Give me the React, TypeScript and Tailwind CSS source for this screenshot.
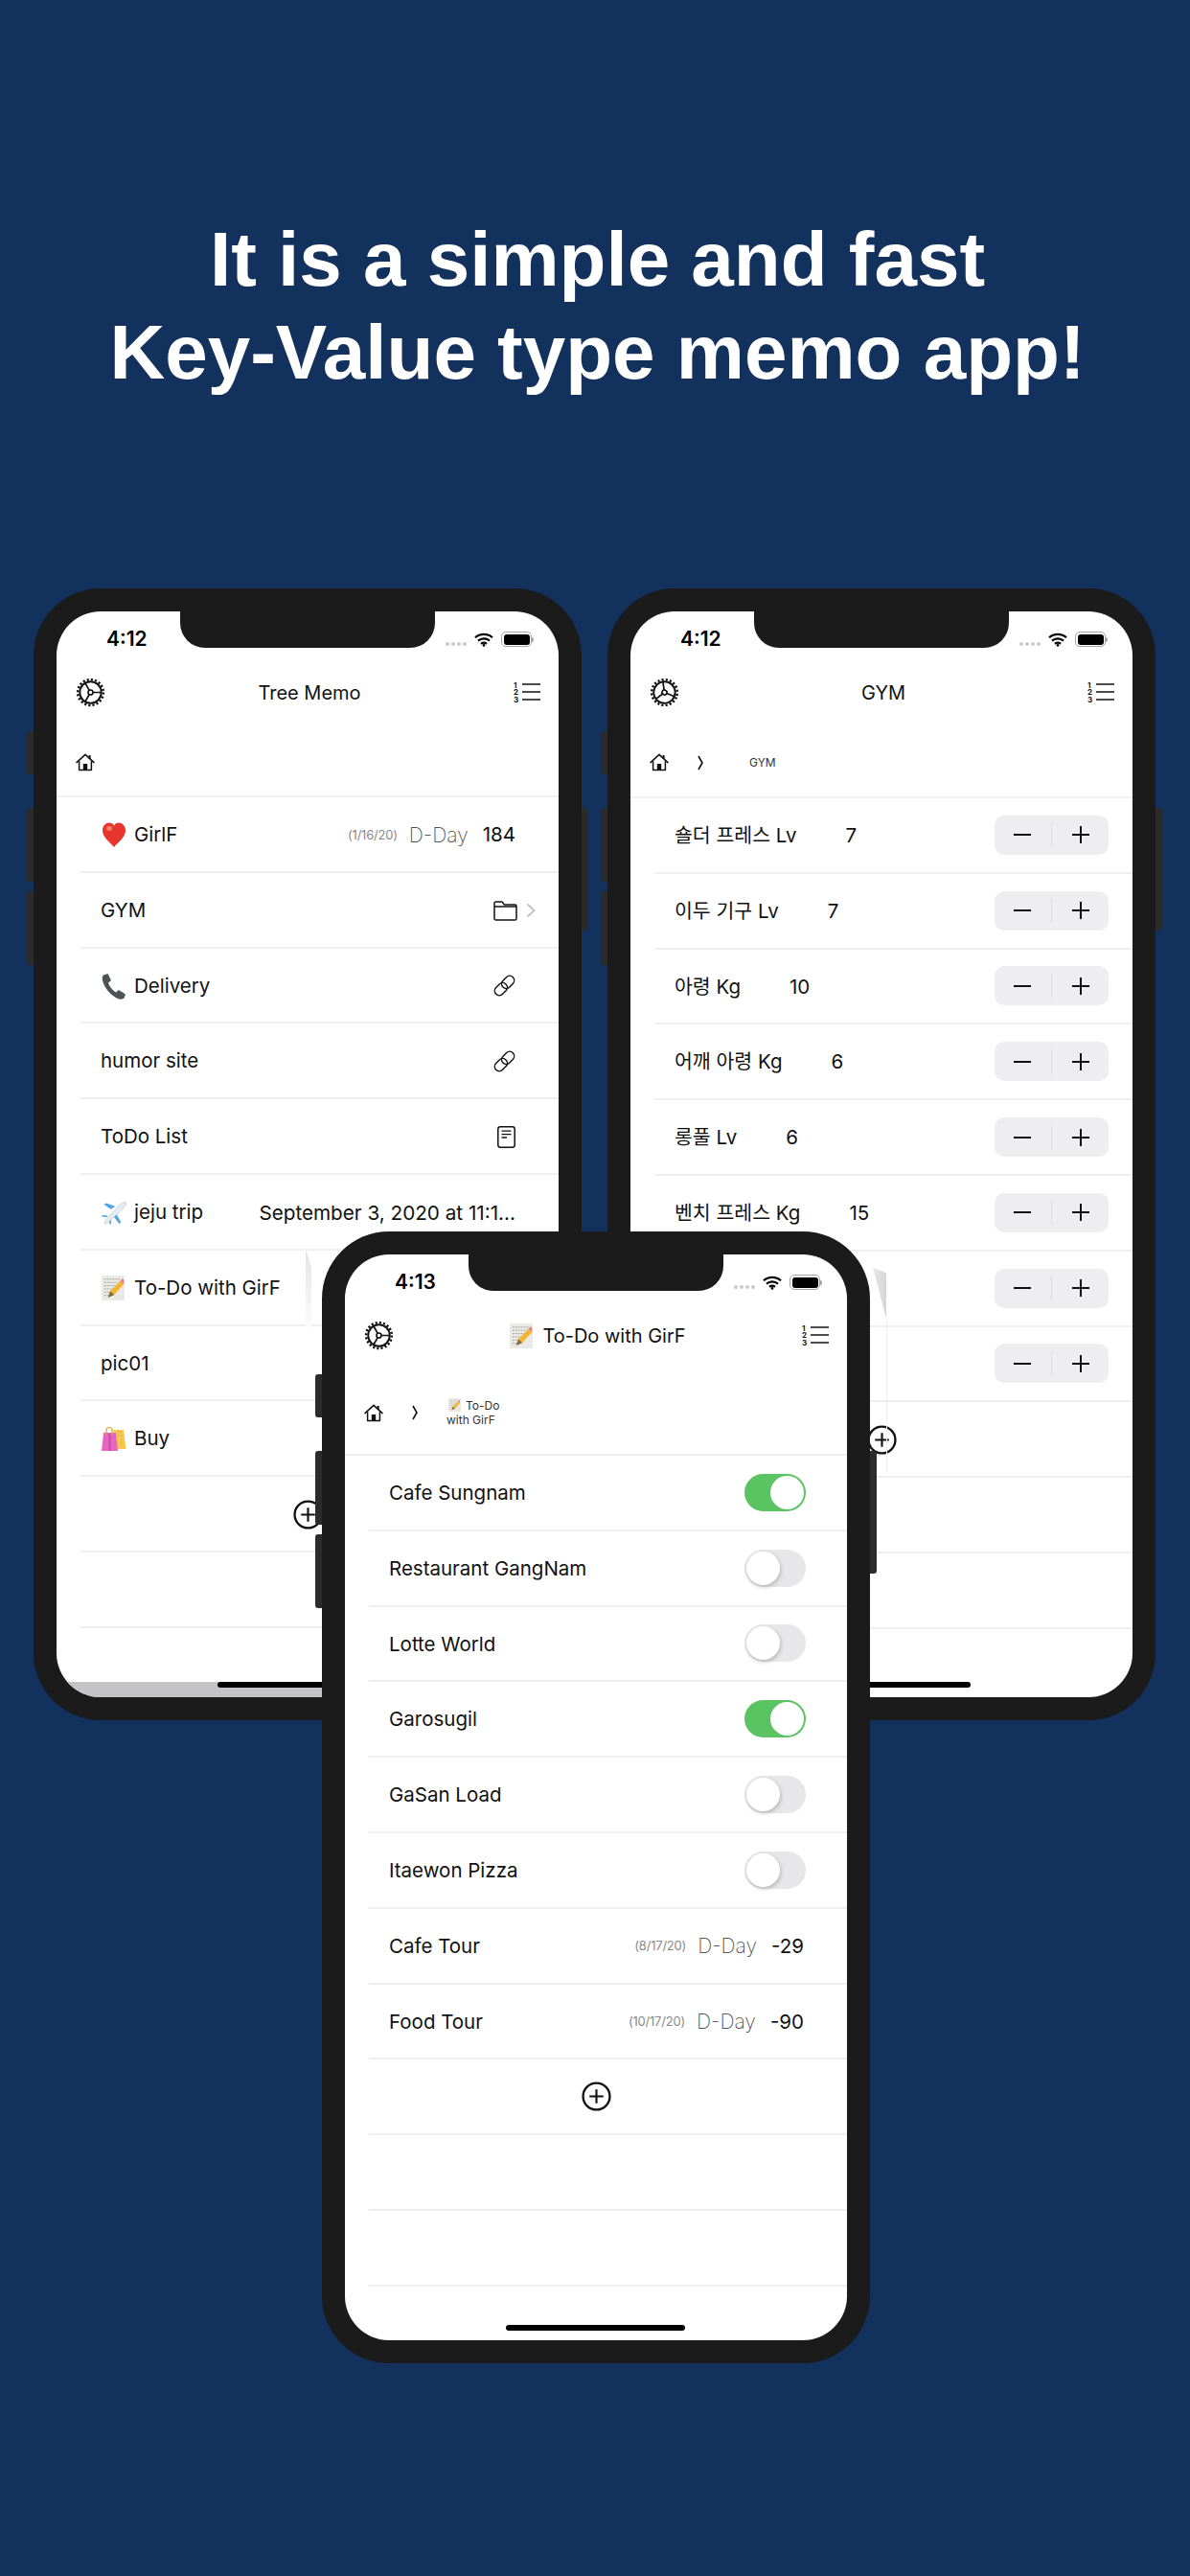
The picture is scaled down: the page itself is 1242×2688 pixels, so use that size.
import type { ReactNode } from "react";

const sans = "font-['Inter','Noto_Sans_CJK_KR',sans-serif]";

function Gear({ rotate = 0 }: { rotate?: number }) {
  return (
    <svg viewBox="0 0 32 32" className="w-[31px] h-[31px]" fill="none" stroke="#111">
      <g transform={`rotate(${rotate} 16 16)`}>
        <circle cx="16" cy="16" r="11.6" strokeWidth="2" />
        <circle cx="16" cy="16" r="13.8" strokeWidth="2.6" strokeDasharray="2.2 2.13" />
        <circle cx="16" cy="16" r="2.6" strokeWidth="1.7" />
        <path d="M18.6 16H27M14.7 13.75L10.2 6M14.7 18.25L10.2 26" strokeWidth="1.8" />
      </g>
    </svg>
  );
}

function NumberList() {
  return (
    <svg viewBox="0 0 28 22" className="w-[28px] h-[22px]" fill="#111">
      <path d="M9 3h19M9 11h19M9 19h19" stroke="#111" strokeWidth="1.6" />
      <text x="0" y="6.5" fontSize="8" fontWeight="700" fontFamily="Inter, sans-serif">1</text>
      <text x="0" y="14" fontSize="8" fontWeight="700" fontFamily="Inter, sans-serif">2</text>
      <text x="0" y="21.5" fontSize="8" fontWeight="700" fontFamily="Inter, sans-serif">3</text>
    </svg>
  );
}

function Home() {
  return (
    <svg viewBox="0 0 20 19" className="w-[20px] h-[19px]" fill="none" stroke="#111" strokeWidth="1.5">
      <path d="M1 9.6L10 1.4l9 8.2" strokeLinecap="round" strokeLinejoin="round" />
      <path d="M3.6 8.2V17.6H16.4V8.2" strokeLinejoin="round" />
      <path d="M14.6 2v4" strokeWidth="2" />
      <rect x="7.8" y="11" width="4.4" height="6.6" fill="#111" stroke="none" />
    </svg>
  );
}

function Folder() {
  return (
    <svg viewBox="0 0 25 21" className="w-[25px] h-[21px]" fill="none" stroke="#111" strokeWidth="1.5">
      <path d="M1 6V2.6C1 1.6 1.6 1 2.6 1H9l2.4 3H22.4c1 0 1.6.6 1.6 1.6V18.4c0 1-.6 1.6-1.6 1.6H2.6C1.6 20 1 19.4 1 18.4V6H24" strokeLinejoin="round" />
    </svg>
  );
}

function Chain() {
  return (
    <svg viewBox="0 0 24 24" className="w-[23px] h-[23px]" fill="none" stroke="#111" strokeWidth="1.5">
      <rect x="-7.6" y="-5" width="15.2" height="10" rx="5" transform="translate(8.2 15.8) rotate(-45)" />
      <rect x="-7.6" y="-5" width="15.2" height="10" rx="5" transform="translate(15.8 8.2) rotate(-45)" />
    </svg>
  );
}

function DocIcon() {
  return (
    <svg viewBox="0 0 19 23" className="w-[19px] h-[23px]" fill="none" stroke="#111">
      <rect x="0.8" y="0.8" width="17.4" height="21.4" rx="2.4" strokeWidth="1.5" />
      <path d="M4.5 5.2h10M4.5 8.6h10M4.5 12h5.5" strokeWidth="1.3" />
    </svg>
  );
}

function AddButton() {
  return (
    <svg viewBox="0 0 32 32" className="w-[31px] h-[31px]" fill="none" stroke="#111">
      <circle cx="16" cy="16" r="14.4" strokeWidth="2.4" />
      <path d="M8.5 16h15M16 8.5v15" strokeWidth="2.2" />
    </svg>
  );
}

function Heart() {
  return (
    <svg viewBox="0 0 26 28" className="w-[26px] h-[28px]">
      <path d="M13 27C8 21 1 16.500 1 9.500 1 4.500 4.500 1.500 8 1.500c2.300 0 4 1.200 5 3.200 1-2 2.700-3.200 5-3.200 3.500 0 7 3 7 8 0 7-7 11.500-12 17.500z" fill="#e8352e" />
      <ellipse cx="8" cy="7.500" rx="3" ry="2.500" fill="#f87d70" />
    </svg>
  );
}

function PhoneEmoji() {
  return (
    <svg viewBox="0 0 26 28" className="w-[26px] h-[28px]">
      <path d="M2 2.500L6.500 1 10 8l-3 2.500c1 3.500 4.500 8 8 10l3-2.500 7 4.500-1.500 4c-1 1-3 1.500-5 1C10 25 2 15 0.800 7 .5 5 1 3.500 2 2.500z" fill="#4d5257" />
    </svg>
  );
}

function Plane() {
  return (
    <svg viewBox="0 0 28 28" className="w-[27px] h-[27px]">
      <path d="M11 10L3.500 5 6 3.500 16 7z" fill="#4ea4e4" />
      <path d="M17 15l5 9-1.800 2L14 18z" fill="#4ea4e4" />
      <path d="M6.500 19L1 18l1-1.500 6 .5zM9 21l1 6 1.500-1-.5-6z" fill="#4ea4e4" />
      <path d="M4.500 23.500C8 19 16 10 22 4.500c2-1.500 4.500-2.500 5.300-1.800.8.800-.2 3.300-1.800 5.300C20 14 11 22 6.500 25.500c-1.500 1-3 .5-2-2z" fill="#e8edf2" stroke="#a9b6c2" strokeWidth=".6" />
    </svg>
  );
}

function Memo() {
  return (
    <svg viewBox="0 0 26 27" className="w-[25px] h-[26px]">
      <rect x="0" y="0" width="25" height="27" fill="#e9e9e6" />
      <path d="M3 4h17M3 7.500h14M3 11h16M3 14.500h10M3 18h8M3 21.500h6" stroke="#9a9a98" strokeWidth=".9" strokeDasharray="2 1" />
      <path d="M7 24l2.500-7L20 6l4 3.500L13.500 21z" fill="#f2b632" />
      <path d="M20 6l1.800-1.900c.8-.6 1.700-.5 2.300.2.600.7.600 1.700 0 2.400L24 9.500z" fill="#e58686" />
      <path d="M7 24l2.500-7 4 4z" fill="#7a6a4a" />
    </svg>
  );
}

function Bags() {
  return (
    <svg viewBox="0 0 27 27" className="w-[27px] h-[27px]">
      <path d="M13 4h11l2.500 20H15z" fill="#f4c94f" />
      <path d="M18 6h1M18 10h1M21 6h1M21 10h1M21 14h1M21 18h1" stroke="#d08a33" strokeWidth="1.2" />
      <path d="M3 7h13l2 19H1z" fill="#e864c4" />
      <path d="M6 10V4.500C6 2.500 7.500 1.500 9 1.500s3 1 3 3V10" fill="none" stroke="#d9a13d" strokeWidth="1.2" />
      <path d="M8.500 8v18h2V8z" fill="#c84fa8" />
    </svg>
  );
}

function Phone({ time, children, strip }: { time: string; children: ReactNode; strip?: boolean }) {
  return (
    <div className="relative w-[572px] h-[1181px] shrink-0 rounded-[70px] bg-[#1b1b1b] p-[24px]">
      <div className="absolute left-[-7px] top-[149px] w-[7px] h-[45px] rounded-l-[3px] bg-[#2b2b2b]" />
      <div className="absolute left-[-7px] top-[229px] w-[7px] h-[77px] rounded-l-[3px] bg-[#2b2b2b]" />
      <div className="absolute left-[-7px] top-[316px] w-[7px] h-[77px] rounded-l-[3px] bg-[#2b2b2b]" />
      <div className="absolute right-[-7px] top-[229px] w-[7px] h-[128px] rounded-r-[3px] bg-[#2b2b2b]" />
      <div className={`relative w-[524px] h-[1133px] overflow-hidden rounded-[46px] bg-white ${sans}`}>
        <div className="absolute left-[129px] top-0 w-[266px] h-[38px] rounded-b-[26px] bg-[#1b1b1b]" />
        <div className="h-[60px] pt-[16px] pl-[52px] pr-[26px]">
          <div className="flex h-[26px] items-center">
            <span className="text-[21px] leading-[26px] font-semibold text-black">{time}</span>
            <div className="ml-auto flex items-center">
              <div className="mt-[10px] flex gap-[1.500px]">
                <i className="w-[4.500px] h-[4.500px] rounded-full bg-[#c9c9c9]" />
                <i className="w-[4.500px] h-[4.500px] rounded-full bg-[#c9c9c9]" />
                <i className="w-[4.500px] h-[4.500px] rounded-full bg-[#c9c9c9]" />
                <i className="w-[4.500px] h-[4.500px] rounded-full bg-[#c9c9c9]" />
              </div>
              <svg viewBox="0 0 20 15" className="ml-[8px] w-[20px] h-[15px]" fill="none" stroke="#000" strokeWidth="2.200">
                <path d="M1 5.200c5-4.500 13-4.500 18 0M4 8.600c3.400-3 8.600-3 12 0M7 11.800c1.800-1.400 4.200-1.400 6 0" />
                <circle cx="10" cy="13.400" r="1.300" fill="#000" stroke="none" />
              </svg>
              <div className="ml-[8px] flex h-[16px] w-[32px] items-center justify-center rounded-[5px] border border-[#a5a5a5]">
                <div className="h-[11px] w-[27px] rounded-[3px] bg-black" />
              </div>
              <div className="h-[5px] w-[2px] rounded-r-[2px] bg-[#a5a5a5]" />
            </div>
          </div>
        </div>
        {children}
        {strip && <div className="absolute bottom-0 left-0 h-[16px] w-full bg-[#c4c4c6]" />}
        <div className="absolute bottom-[10px] left-[168px] h-[6.500px] w-[187px] rounded-full bg-black" />
      </div>
    </div>
  );
}

function NavBar({ title, icon, gearRotate = 0 }: { title: string; icon?: ReactNode; gearRotate?: number }) {
  return (
    <div className="flex h-[48px] items-center pl-[20px] pr-[19px]">
      <Gear rotate={gearRotate} />
      <div className="flex flex-1 items-center justify-center gap-[9px] pt-[2px] text-[20px] text-[#111]">
        {icon}
        <span>{title}</span>
      </div>
      <NumberList />
    </div>
  );
}

function Row({ children, className = "" }: { children?: ReactNode; className?: string }) {
  return (
    <div className={`flex h-[78.8px] items-center border-b-2 border-[#efeff0] pt-[2px] pl-[21px] pr-[45px] text-[20.5px] text-[#111] ${className}`}>
      {children}
    </div>
  );
}

function EmojiLabel({ icon, text }: { icon: ReactNode; text: string }) {
  return (
    <div className="flex items-center gap-[8px]">
      <span className="flex w-[27px] justify-center">{icon}</span>
      <span>{text}</span>
    </div>
  );
}

function DDay({ date, value }: { date: string; value: string }) {
  return (
    <div className="ml-auto flex items-center">
      <span className="text-[13px] tracking-[-0.2px] text-[#8a8a8a]">{date}</span>
      <span className="ml-[12px] text-[21px] font-extralight text-[#555]">D-Day</span>
      <span className="ml-[15px] text-[20.5px]">{value}</span>
    </div>
  );
}

function Stepper() {
  return (
    <div className="flex h-[41px] w-[119px] items-center rounded-[10px] bg-[#eeeef0]">
      <div className="flex flex-1 justify-center">
        <div className="h-[2px] w-[18px] bg-[#111]" />
      </div>
      <div className="h-[26px] w-[1.500px] bg-[#dcdcde]" />
      <div className="relative flex flex-1 items-center justify-center">
        <div className="h-[2px] w-[18px] bg-[#111]" />
        <div className="absolute h-[18px] w-[2px] bg-[#111]" />
      </div>
    </div>
  );
}

function GymRow({ label, value }: { label: string; value: string }) {
  return (
    <Row className="!pr-[25px] !pt-0">
      <span className="pt-[2px]">{label}</span>
      <span className="ml-[51px] pt-[2px]">{value}</span>
      <div className="ml-auto">
        <Stepper />
      </div>
    </Row>
  );
}

function Toggle({ on }: { on?: boolean }) {
  return on ? (
    <div className="ml-auto flex h-[39px] w-[64px] items-center justify-end rounded-full bg-[#5ac463] pr-[2px]">
      <div className="h-[35px] w-[35px] rounded-full bg-white" />
    </div>
  ) : (
    <div className="ml-auto flex h-[39px] w-[64px] items-center rounded-full bg-[#e7e7e9] pl-[2px]">
      <div className="h-[35px] w-[35px] rounded-full bg-white shadow-[1px_2px_4px_rgba(0,0,0,0.22)]" />
    </div>
  );
}

function TreePhone() {
  return (
    <Phone time="4:12" strip>
      <NavBar title="Tree Memo" />
      <div className="flex h-[86px] items-center border-b-2 border-[#efeff0] pt-[14px] pl-[20px]">
        <Home />
      </div>
      <div className="ml-[25px]">
        <Row>
          <EmojiLabel icon={<Heart />} text="GirlF" />
          <DDay date="(1/16/20)" value="184" />
        </Row>
        <Row className="!pr-[24px]">
          <span>GYM</span>
          <div className="ml-auto flex items-center gap-[9px]">
            <Folder />
            <svg viewBox="0 0 10 16" className="w-[10px] h-[16px]" fill="none" stroke="#c4c4c7" strokeWidth="2">
              <path d="M1.500 1.500L8.500 8l-7 6.500" />
            </svg>
          </div>
        </Row>
        <Row>
          <EmojiLabel icon={<PhoneEmoji />} text="Delivery" />
          <div className="ml-auto"><Chain /></div>
        </Row>
        <Row>
          <span>humor site</span>
          <div className="ml-auto"><Chain /></div>
        </Row>
        <Row>
          <span>ToDo List</span>
          <div className="ml-auto"><DocIcon /></div>
        </Row>
        <Row>
          <EmojiLabel icon={<Plane />} text="jeju trip" />
          <span className="ml-auto text-[20.7px]">September 3, 2020 at 11:1...</span>
        </Row>
        <Row><EmojiLabel icon={<Memo />} text="To-Do with GirF" /></Row>
        <Row><span>pic01</span></Row>
        <Row><EmojiLabel icon={<Bags />} text="Buy" /></Row>
        <Row className="justify-center !pl-0 !pr-[25px]"><AddButton /></Row>
        <Row />
      </div>
    </Phone>
  );
}

const gymRows = [
  ["숄더 프레스 Lv", "7"],
  ["이두 기구 Lv", "7"],
  ["아령 Kg", "10"],
  ["어깨 아령 Kg", "6"],
  ["롱풀 Lv", "6"],
  ["벤치 프레스 Kg", "15"],
  ["", ""],
  ["", ""],
];

function GymPhone() {
  return (
    <Phone time="4:12">
      <NavBar title="GYM" gearRotate={22} />
      <div className="flex h-[87px] items-center border-b-2 border-[#efeff0] pt-[14px] pl-[20px]">
        <Home />
        <svg viewBox="0 0 6 16" className="ml-[30px] w-[6px] h-[16px]" fill="none" stroke="#111" strokeWidth="1.600">
          <path d="M1 1l4 7-4 7" />
        </svg>
        <span className="ml-[48px] text-[12px] text-[#333]">GYM</span>
      </div>
      <div className="ml-[25px]">
        {gymRows.map(([label, value], i) => (
          <GymRow key={i} label={label} value={value} />
        ))}
        <Row className="justify-center !pl-0 !pr-[25px]"><AddButton /></Row>
        <Row />
        <Row />
      </div>
    </Phone>
  );
}

const todoRows: [string, boolean][] = [
  ["Cafe Sungnam", true],
  ["Restaurant GangNam", false],
  ["Lotte World", false],
  ["Garosugil", true],
  ["GaSan Load", false],
  ["Itaewon Pizza", false],
];

function TodoPhone() {
  return (
    <Phone time="4:13">
      <NavBar title="To-Do with GirF" icon={<Memo />} />
      <div className="flex h-[102px] items-center border-b-2 border-[#efeff0] pt-[14px] pl-[20px]">
        <Home />
        <svg viewBox="0 0 6 16" className="ml-[30px] w-[6px] h-[16px]" fill="none" stroke="#111" strokeWidth="1.600">
          <path d="M1 1l4 7-4 7" />
        </svg>
        <div className="ml-[30px] w-[64px] text-[12px] leading-[15px] text-[#333]">
          <span className="ml-[2px] mr-[5px] inline-block h-[14px] w-[13px] align-[-2px] bg-[#e9e9e6] [&>svg]:h-[14px] [&>svg]:w-[13px]"><Memo /></span>
          To-Do with GirF
        </div>
      </div>
      <div className="ml-[25px]">
        {todoRows.map(([label, on]) => (
          <Row key={label} className="!pr-[43px] !pt-0">
            <span className="pt-[2px]">{label}</span>
            <Toggle on={on} />
          </Row>
        ))}
        <Row>
          <span>Cafe Tour</span>
          <DDay date="(8/17/20)" value="-29" />
        </Row>
        <Row>
          <span>Food Tour</span>
          <DDay date="(10/17/20)" value="-90" />
        </Row>
        <Row className="justify-center !pl-0 !pr-[25px] !pt-0"><AddButton /></Row>
        <Row />
        <Row />
      </div>
    </Phone>
  );
}

export default function App() {
  return (
    <div className="relative h-[2688px] w-[1242px] overflow-hidden bg-[#12315d]">
      <h1 className="pt-[222px] pl-[5px] text-center font-['Liberation_Sans',sans-serif] text-[80px] leading-[97px] font-bold text-white">
        It is a simple and fast
        <br />
        Key-Value type memo app!
      </h1>
      <div className="mt-[198px] flex gap-[27px] pl-[35px]">
        <TreePhone />
        <GymPhone />
      </div>
      {/* faint leftovers of a shadow behind the front phone */}
      <div className="absolute left-[319px] top-[1304px] h-[90px] w-[6px] bg-gradient-to-b from-[#e4e4e4] to-white [clip-path:polygon(0_0,100%_20%,100%_100%,0_100%)]" />
      <div className="absolute left-[911px] top-[1323px] h-[53px] w-[14px] bg-gradient-to-r from-[#e6e6e6] to-[#d6d6d6] [clip-path:polygon(0_0,100%_10%,100%_100%)]" />
      <div className="absolute left-[925px] top-[1376px] h-[160px] w-px bg-[#f0f0f0]" />
      <div className="relative z-10 ml-[336px] -mt-[510px] w-[572px]">
        <TodoPhone />
      </div>
    </div>
  );
}
